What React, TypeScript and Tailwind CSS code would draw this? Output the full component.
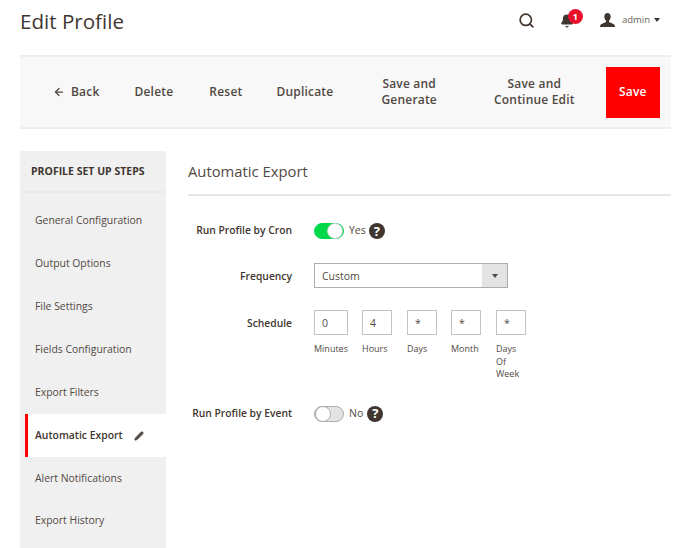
import { ArrowLeft, Pencil, Search, Bell } from "lucide-react";

const steps = [
  "General Configuration",
  "Output Options",
  "File Settings",
  "Fields Configuration",
  "Export Filters",
  "Automatic Export",
  "Alert Notifications",
  "Export History",
];

const schedule = [
  { value: "0", label: "Minutes", w: "w-[34px]", mr: "mr-[14px]" },
  { value: "4", label: "Hours", w: "w-[30px]", mr: "mr-[15px]" },
  { value: "*", label: "Days", w: "w-[30px]", mr: "mr-[14px]" },
  { value: "*", label: "Month", w: "w-[30px]", mr: "mr-[15px]" },
  { value: "*", label: "Days Of Week", w: "w-[30px]", mr: "" },
];

function Help() {
  return (
    <span className="flex h-4 w-4 items-center justify-center rounded-full bg-[#41362f] text-[13px] font-bold leading-none text-white">
      ?
    </span>
  );
}

function Toggle({ on }: { on: boolean }) {
  return (
    <span
      className={`flex h-4 w-[30px] items-center rounded-full border ${
        on ? "justify-end border-[#00d84a] bg-[#00d84a]" : "justify-start border-[#adadad] bg-[#e3e3e3]"
      }`}
    >
      <span className={`h-4 w-4 rounded-full border bg-white ${on ? "border-[#d0d0d0]" : "border-[#adadad]"}`} />
    </span>
  );
}

export default function App() {
  return (
    <div className="h-[548px] w-[686px] overflow-hidden bg-white font-['Open_Sans',sans-serif] text-[#41362f]">
      <header className="flex h-[55px] items-center justify-between pl-5 pr-[26px]">
        <h1 className="mb-3 text-[20.6px] font-normal leading-none">Edit Profile</h1>
        <div className="mb-[15px] flex items-center">
          <Search className="mr-[25px] h-[17px] w-[17px] text-[#41362f]" strokeWidth={2.4} />
          <span className="relative mr-[26px] h-[18px] w-[14px]">
            <Bell className="absolute left-0 top-[3px] h-[14px] w-[14px] fill-[#41362f] text-[#41362f]" />
            <span className="absolute -top-[2px] left-[8px] flex h-[15px] w-[15px] items-center justify-center rounded-full bg-[#e8102a] text-[9px] font-bold text-white">
              1
            </span>
          </span>
          <svg viewBox="0 0 15 15" className="mr-[7px] h-[15px] w-[15px] fill-[#41362f]">
            <path d="M7.5 0C5.5 0 4.3 1.5 4.3 3.6c0 1.7.8 3.4 1.7 4.2v1.3C4.2 10 .8 10.8.2 12.6L0 14h15l-.2-1.4c-.6-1.8-4-2.6-5.8-3.5V7.8c.9-.8 1.7-2.5 1.7-4.2C10.7 1.5 9.5 0 7.5 0z" />
          </svg>
          <span className="mr-[4px] text-[9.5px] text-[#676056]">admin</span>
          <span className="h-0 w-0 border-x-[3.5px] border-t-[4px] border-x-transparent border-t-[#41362f]" />
        </div>
      </header>

      <div className="ml-5 flex h-[74px] w-[651px] items-center border-y-2 border-[#eeeeee] bg-[#f8f8f8] text-[12px] font-semibold tracking-[0.2px] text-[#514943]">
        <span className="ml-[33px] flex items-center">
          <ArrowLeft className="mr-[6px] h-[12px] w-[12px]" strokeWidth={2.5} />
          Back
        </span>
        <span className="ml-[35px]">Delete</span>
        <span className="ml-[36px]">Reset</span>
        <span className="ml-[34px]">Duplicate</span>
        <span className="ml-[48px] text-center leading-4">
          Save and
          <br />
          Generate
        </span>
        <span className="ml-[57px] text-center leading-4">
          Save and
          <br />
          Continue Edit
        </span>
        <span className="ml-[31px] flex h-[51px] w-[54px] items-center justify-center bg-[#ff0000] text-white">Save</span>
      </div>

      <div className="ml-5 mt-[22px] flex">
        <aside className="h-[400px] w-[146px] shrink-0 bg-[#f0f0f0]">
          <div className="flex h-[42px] items-center border-b-2 border-[#eaeaea] pl-[11px] pt-[1px] text-[10.5px] font-bold text-[#41362f]">
            PROFILE SET UP STEPS
          </div>
          <ul className="mt-[6px] text-[10.4px]">
            {steps.map((s) =>
              s === "Automatic Export" ? (
                <li
                  key={s}
                  className="ml-[5px] flex h-[43px] items-center gap-[11px] border-l-[3px] border-[#ff0000] bg-white pl-[7px] font-semibold text-[#41362f]"
                >
                  {s}
                  <Pencil className="h-[10px] w-[10px] fill-[#514943] text-[#514943]" />
                </li>
              ) : (
                <li key={s} className="flex h-[43px] items-center pl-[15px] text-[#514943] last:h-[41px]">
                  {s}
                </li>
              ),
            )}
          </ul>
        </aside>

        <main className="ml-[22px] w-[483px]">
          <h2 className="flex h-[45px] items-center border-b-2 border-[#e6e6e6] pb-[2px] text-[14.8px] font-normal text-[#514943]">
            Automatic Export
          </h2>

          <div className="mt-[25px] flex h-5 items-center">
            <span className="w-[104px] text-right text-[10.3px] font-semibold">Run Profile by Cron</span>
            <span className="ml-[22px]"><Toggle on /></span>
            <span className="ml-[5px] text-[10.5px] text-[#514943]">Yes</span>
            <span className="ml-[3px]"><Help /></span>
          </div>

          <div className="mt-[22px] flex items-center">
            <span className="w-[104px] pt-[2px] text-right text-[10.3px] font-semibold">Frequency</span>
            <div className="ml-[22px] flex h-[25px] w-[194px] items-center border border-[#adadad] bg-white text-[10.5px] text-[#514943]">
              <span className="flex-1 pl-[7px] pt-[2px]">Custom</span>
              <span className="flex h-full w-[25px] items-center justify-center bg-[#e3e3e3]">
                <span className="h-0 w-0 border-x-[3.5px] border-t-[4px] border-x-transparent border-t-[#514943]" />
              </span>
            </div>
          </div>

          <div className="mt-[22px] flex items-start">
            <span className="flex h-[25px] w-[104px] items-center justify-end pt-[2px] text-[10.3px] font-semibold">Schedule</span>
            <div className="ml-[22px] flex">
              {schedule.map((c) => (
                <div key={c.label} className={`${c.w} ${c.mr}`}>
                  <div className="flex h-[25px] items-center border border-[#c2c2c2] pl-[7px] pt-[2px] text-[10.5px] text-[#514943]">
                    {c.value}
                  </div>
                  <div className="mt-[8px] text-[9px] leading-[12.5px] text-[#514943]">{c.label}</div>
                </div>
              ))}
            </div>
          </div>

          <div className="mt-[23px] flex h-5 items-center">
            <span className="w-[104px] whitespace-nowrap text-right text-[10.3px] font-semibold">Run Profile by Event</span>
            <span className="ml-[22px]"><Toggle on={false} /></span>
            <span className="ml-[5px] text-[10.5px] text-[#514943]">No</span>
            <span className="ml-[4px]"><Help /></span>
          </div>
        </main>
      </div>
    </div>
  );
}
